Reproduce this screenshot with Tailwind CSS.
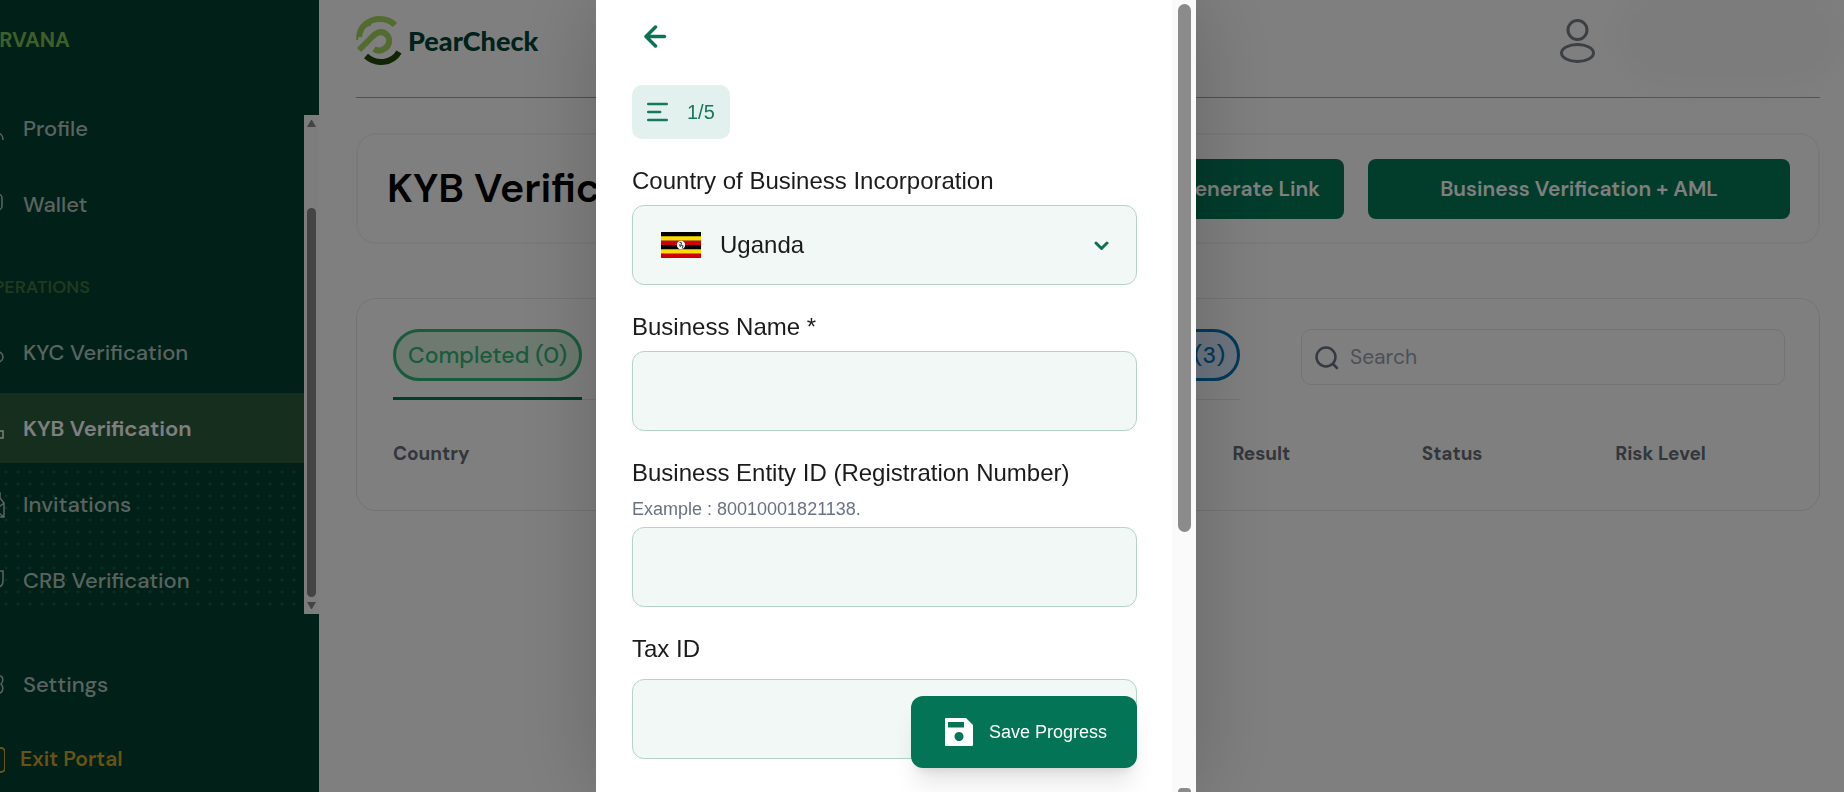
<!DOCTYPE html>
<html lang="en">

<head>
    <meta charset="UTF-8">
    <meta name="viewport" content="width=device-width, initial-scale=1.0">
    <title>PearCheck - KYB Verification</title>
    <script src="https://cdn.jsdelivr.net/npm/@tailwindcss/browser@4"></script>
</head>

<body class="bg-white font-['DM_Sans',Inter,sans-serif] [font-optical-sizing:none] text-gray-900 h-screen overflow-hidden">
    <div class="flex h-full">
        <!-- Sidebar -->
        <aside class="w-[319px] shrink-0 h-full flex flex-col overflow-hidden bg-[#02402f] text-[#b3c8c0] text-[22px] font-medium">
            <div class="h-[115px] shrink-0 pt-6">
                <p class="w-[70px] flex justify-end leading-8 text-[21px] font-bold text-[#7cbc58]">NIRVANA</p>
            </div>

            <nav class="relative flex-1 min-h-0 overflow-hidden">
                <div class="absolute left-0 right-[15px] bottom-0 h-[148px] bg-[radial-gradient(circle_at_center,#145f48_1px,transparent_2px)] bg-[size:12px_12px]"></div>
                <ul class="relative mr-[15px] -mt-[22px] flex flex-col gap-1.5">
                    <li>
                        <a href="#" class="flex items-center gap-[18px] h-[70px]">
                            <svg class="-ml-[23px] size-7 shrink-0" viewBox="0 0 28 28" fill="none" stroke="currentColor" stroke-width="1.5"><circle cx="14" cy="8" r="5" /><path d="M2 26c0-6 5-9 12-9s12 3 12 9" /></svg>
                            Profile
                        </a>
                    </li>
                    <li>
                        <a href="#" class="flex items-center gap-[18px] h-[70px]">
                            <svg class="-ml-[23px] size-7 shrink-0" viewBox="0 0 28 28" fill="none" stroke="currentColor" stroke-width="1.5"><rect x="3" y="4" width="22" height="16" rx="4" /></svg>
                            Wallet
                        </a>
                    </li>
                    <li class="h-[66px] pt-[18px]">
                        <p class="w-[90px] flex justify-end leading-[48px] text-lg font-semibold text-[#3e7440]">OPERATIONS</p>
                    </li>
                    <li>
                        <a href="#" class="flex items-center gap-[18px] h-[70px]">
                            <svg class="-ml-[23px] size-7 shrink-0" viewBox="0 0 28 28" fill="none" stroke="currentColor" stroke-width="1.5"><circle cx="12" cy="8" r="5" /><path d="M3 24c0-5 4-8 9-8" /><circle cx="21" cy="19" r="5" /></svg>
                            KYC Verification
                        </a>
                    </li>
                    <li class="bg-[#2a5c3c] text-white font-semibold">
                        <a href="#" class="flex items-center gap-[18px] h-[70px]">
                            <svg class="-ml-[23px] size-7 shrink-0" viewBox="0 0 28 28" fill="none" stroke="currentColor" stroke-width="1.5"><rect x="9" y="3" width="8" height="7" /><rect x="1" y="17" width="7" height="7" /><rect x="18" y="17" width="8" height="7" /></svg>
                            KYB Verification
                        </a>
                    </li>
                    <li>
                        <a href="#" class="flex items-center gap-[18px] h-[70px]">
                            <svg class="-ml-[23px] size-7 shrink-0" viewBox="0 0 28 28" fill="none" stroke="currentColor" stroke-width="1.5"><path d="M5 13V3h18v6M23 8l4 5v14H1V13l4-5M27 13l-9 7 9 7M1 13l9 7-9 7" /></svg>
                            Invitations
                        </a>
                    </li>
                    <li>
                        <a href="#" class="flex items-center gap-[18px] h-[70px]">
                            <svg class="-ml-[23px] size-7 shrink-0" viewBox="0 0 28 28" fill="none" stroke="currentColor" stroke-width="1.5"><path d="M2 5h24v10c0 3-1 5-4 6l-8 4-8-4c-3-1-4-3-4-6z" /></svg>
                            CRB Verification
                        </a>
                    </li>
                </ul>
                <!-- Scrollbar -->
                <div class="absolute top-0 right-0 w-[15px] h-full bg-[#fafafa] flex flex-col items-center py-[5px] gap-[5px]">
                    <svg class="w-[9px] h-[7px] shrink-0" viewBox="0 0 9 7" fill="#888"><path d="M4 0h1l4 7H0z" /></svg>
                    <div class="mt-[76px] w-[9px] flex-1 rounded-full bg-[#888]"></div>
                    <svg class="w-[9px] h-[7px] shrink-0" viewBox="0 0 9 7" fill="#888"><path d="M0 0h9L5 7H4z" /></svg>
                </div>
            </nav>

            <div class="h-[178px] shrink-0 pt-[35px] flex flex-col gap-1.5">
                <a href="#" class="flex items-center gap-[18px] h-[70px] shrink-0">
                    <svg class="-ml-[23px] size-7 shrink-0" viewBox="0 0 28 28" fill="none" stroke="currentColor" stroke-width="1.5"><circle cx="13" cy="14" r="4" /><path d="M22 6c4-1 5 5 2 8 3 3 2 9-2 9l-5 2h-8l-5-2c-4 0-5-6-2-9-3-3-2-9 2-8l5-3h8z" /></svg>
                    Settings
                </a>
                <a href="#" class="flex items-center gap-[15px] h-[70px] shrink-0 font-semibold text-[21px] text-[#cfa52f]">
                    <svg class="-ml-[23px] size-7 shrink-0" viewBox="0 0 28 28" fill="none" stroke="currentColor" stroke-width="2"><rect x="4" y="2" width="24" height="24" rx="4" /></svg>
                    Exit Portal
                </a>
            </div>
        </aside>

        <!-- Main Content -->
        <main class="flex-1 min-w-0 pl-[37px] pr-6">
            <header class="relative h-[98px] pb-4 border-b border-gray-400 flex items-center justify-between">
                <a href="#" class="flex items-center gap-1.5">
                    <svg class="w-[46px] h-[49px]" viewBox="0 0 46 49" fill="none" stroke-width="6">
                        <path d="M3 21C4 10 13 3 24 3c6 0 11 2 15 6" stroke="#a4d65e" />
                        <path d="M3 34L16 21c5-5 10-6 14-3 5 4 4 12-2 15-3 2-7 2-10 0" stroke="#a4d65e" />
                        <path d="M1 24C2 16 8 9 15 9" stroke="#a4d65e" stroke-width="2" />
                        <path d="M10 40c10 9 26 8 33-4" stroke="#1f4a06" />
                    </svg>
                    <span class="font-[Lato,sans-serif] font-black text-[27px] leading-8 text-[#004535]">PearCheck</span>
                </a>
                <button type="button" aria-label="Account" class="mr-[225px] text-[#787f86]">
                    <svg class="w-[35px] h-11" viewBox="0 0 35 44" fill="none" stroke="currentColor" stroke-width="3"><circle cx="17.500" cy="11" r="9.500" /><ellipse cx="17.500" cy="34" rx="16" ry="8.500" /></svg>
                </button>
                <div class="absolute -top-4 -right-6 w-[230px] h-[104px] rounded-full bg-gray-100/60 blur-lg"></div>
            </header>

            <section class="mt-[35px] h-[111px] border-2 border-gray-100 rounded-[20px] pl-[29px] pr-7 flex items-center justify-between">
                <h1 class="text-[41px] leading-none font-semibold text-black">KYB Verification</h1>
                <div class="flex gap-6">
                    <button type="button" class="h-[60px] px-6 pt-0.5 rounded-lg bg-[#047857] text-white text-[21px] font-semibold">Generate Link</button>
                    <button type="button" class="w-[422px] h-[60px] pt-0.5 rounded-lg bg-[#047857] text-white text-[21px] font-semibold">Business Verification + AML</button>
                </div>
            </section>

            <section class="mt-[54px] h-[213px] border border-gray-200 rounded-[20px] pl-9 pr-[34px] pt-[30px]">
                <div class="flex items-start justify-between">
                    <div class="w-[847px] h-[71px] border-b border-gray-200 flex justify-between">
                        <button type="button" class="h-[71px] pb-4 border-b-3 border-[#047857] text-[23px] font-medium text-[#34b47a]">
                            <span class="flex items-center h-[52px] px-3 border-3 border-[#34b47a] rounded-full bg-[#dcf4e0]">Completed (0)</span>
                        </button>
                        <button type="button" class="h-[52px] px-3 border-3 border-[#0374b4] rounded-full bg-blue-100 text-[23px] font-medium text-[#0374b4]">In Progress (3)</button>
                    </div>
                    <div class="relative w-[484px]">
                        <svg class="absolute left-3.5 top-[17px] size-6 text-gray-500" viewBox="0 0 24 24" fill="none" stroke="currentColor" stroke-width="2.500" stroke-linecap="round"><circle cx="11" cy="11" r="9.500" /><path d="M18 18l4 4" /></svg>
                        <input type="text" aria-label="Search" placeholder="Search" class="w-full h-14 pl-12 border border-gray-200 rounded-[10px] text-[21px] placeholder:text-gray-400">
                    </div>
                </div>
                <table class="mt-[38px] w-full table-fixed text-left text-[19px] text-[#666e78]">
                    <thead>
                        <tr>
                            <th class="w-[25%] font-bold leading-8">Country</th>
                            <th class="w-[35.3%] font-bold leading-8">Business Name</th>
                            <th class="w-[13.6%] font-bold leading-8">Result</th>
                            <th class="w-[13.9%] font-bold leading-8">Status</th>
                            <th class="font-bold leading-8">Risk Level</th>
                        </tr>
                    </thead>
                </table>
            </section>
        </main>
    </div>

    <!-- Business Verification Modal -->
    <div class="fixed inset-0 flex justify-center pr-[52px] bg-black/50">
        <div role="dialog" aria-label="Business Verification" class="relative w-[600px] h-full bg-white font-['Liberation_Sans',Arial,sans-serif] text-2xl text-[#1b1b1b] shadow-[0_0_80px_rgba(0,0,0,0.2)]">
            <form class="h-full overflow-hidden pl-9 pr-[59px] pt-[13px] flex flex-col items-start gap-6">
                <button type="button" aria-label="Back" class="w-[46px] h-12 shrink-0 flex items-center justify-center text-[#0b7355]">
                    <svg class="size-6" viewBox="0 0 24 24" fill="none" stroke="currentColor" stroke-width="3.500" stroke-linecap="round" stroke-linejoin="round"><path d="M21.500 11.500H3M12.500 2L3 11.500l9.500 9.500" /></svg>
                </button>

                <div class="h-[54px] shrink-0 px-[15px] flex items-center gap-[19px] rounded-[10px] bg-[#e3f1ee] text-xl text-[#16785a]">
                    <svg class="w-[21px] h-5" viewBox="0 0 21 20" fill="none" stroke="currentColor" stroke-width="2.400" stroke-linecap="round"><path d="M1.200 2h18.600M1.200 10h12M1.200 18h18.600" /></svg>
                    1/5
                </div>

                <div class="w-full">
                    <label for="country" class="block leading-9 mb-1.5">Country of Business Incorporation</label>
                    <div class="relative">
                        <select id="country" class="appearance-none w-full h-20 pl-[87px] pr-12 border border-[#b5d3cb] rounded-xl bg-[#f1f8f6]">
                            <option>Uganda</option>
                            <option>Kenya</option>
                        </select>
                        <svg class="absolute left-[29px] top-[27px] w-10 h-[26px] pointer-events-none" viewBox="0 0 40 26">
                            <path fill="#000" d="M0 0h40v26H0z" />
                            <path fill="#fcdc04" d="M0 4.300h40v4.400H0zM0 17.300h40v4.400H0z" />
                            <path fill="#d00000" d="M0 8.700h40V13H0zM0 21.700h40V26H0z" />
                            <circle cx="20" cy="13" r="4.200" fill="#fff" />
                            <path d="M18.500 10l2 1-.5 2 2 1-1 2.500M18.500 12.500l1 2.500" fill="none" stroke="#444" stroke-width="1.100" />
                        </svg>
                        <svg class="absolute right-7 top-[35px] w-4 h-3 pointer-events-none text-[#0b7355]" viewBox="0 0 16 12" fill="none" stroke="currentColor" stroke-width="3" stroke-linecap="round" stroke-linejoin="round"><path d="M3 3l5.500 5.500L14 3" /></svg>
                    </div>
                </div>

                <div class="w-full">
                    <label for="business-name" class="block leading-9 mb-1.5">Business Name *</label>
                    <input id="business-name" type="text" class="block w-full h-20 px-7 border border-[#b5d3cb] rounded-xl bg-[#f1f8f6]">
                </div>

                <div class="w-full">
                    <label for="entity-id" class="block leading-9 mb-1.5">Business Entity ID (Registration Number)</label>
                    <p class="text-lg leading-6 mb-1.5 text-gray-500">Example : 80010001821138.</p>
                    <input id="entity-id" type="text" class="block w-full h-20 px-7 border border-[#b5d3cb] rounded-xl bg-[#f1f8f6]">
                </div>

                <div class="w-full">
                    <label for="tax-id" class="block leading-9 mb-3">Tax ID</label>
                    <input id="tax-id" type="text" class="block w-full h-20 px-7 border border-[#b5d3cb] rounded-xl bg-[#f1f8f6]">
                </div>
            </form>

            <!-- Floating Save Button -->
            <button type="button" class="absolute bottom-6 right-[59px] w-[226px] h-[72px] pl-[34px] flex items-center gap-4 rounded-xl bg-[#047457] text-white text-lg shadow-xl">
                <svg class="size-7" viewBox="0 0 28 28"><path fill="currentColor" fill-rule="evenodd" d="M1 0h20l7 7v20a1 1 0 0 1-1 1H1a1 1 0 0 1-1-1V1a1 1 0 0 1 1-1zM3 4v5.500h16V4zM14 14a4.500 4.500 0 1 0 .01 0z" /></svg>
                Save Progress
            </button>

            <!-- Scrollbar -->
            <div class="absolute top-0 right-0 w-6 h-full bg-[#fafafa] flex flex-col items-end justify-between pt-1 pr-[5px]">
                <div class="w-[13px] h-[67%] rounded-full bg-[#8b8b8b]"></div>
                <div class="w-[13px] h-1 rounded-t-sm bg-[#8b8b8b]"></div>
            </div>
        </div>
    </div>
</body>

</html>
